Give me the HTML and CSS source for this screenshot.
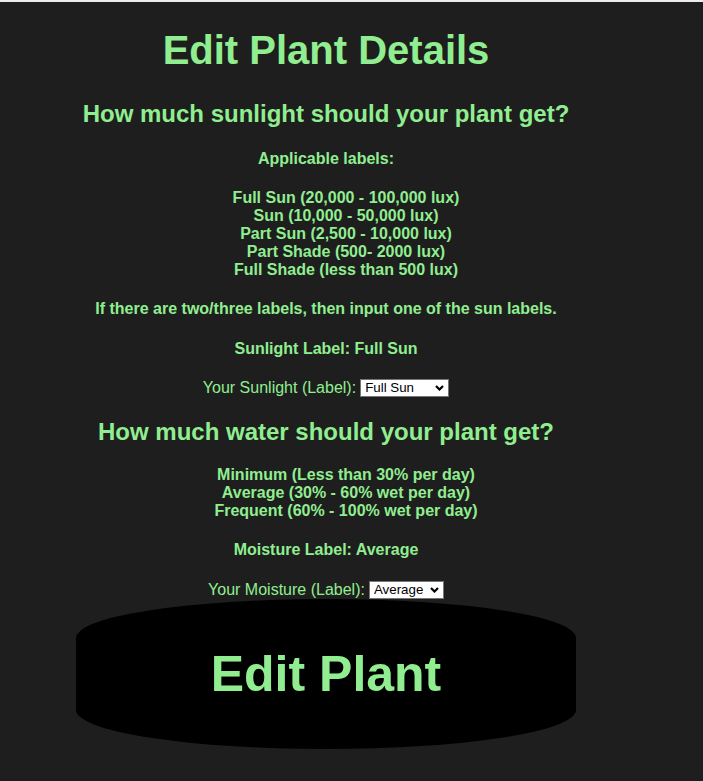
FILE: index.html
```html
<!DOCTYPE html>
<html lang="en">
<head>
<meta charset="utf-8">
<title>Edit Plant Details</title>
<link rel="stylesheet" href="styles.css">
</head>
<body>
<main class="page">
  <h1 class="title">Edit Plant Details</h1>

  <h2 class="section-title section-title--first">How much sunlight should your plant get?</h2>
  <p class="info info--first">Applicable labels:</p>
  <p class="info info--list">Full Sun (20,000 - 100,000 lux)<br>Sun (10,000 - 50,000 lux)<br>Part Sun (2,500 - 10,000 lux)<br>Part Shade (500- 2000 lux)<br>Full Shade (less than 500 lux)</p>
  <p class="info">If there are two/three labels, then input one of the sun labels.</p>
  <p class="info info--label">Sunlight Label: Full Sun</p>
  <div class="field field--sun">
    <label class="field-label" for="sun">Your Sunlight (Label):</label>
    <span class="select-wrap">
      <select id="sun" class="select select--sun">
        <option selected>Full Sun</option>
        <option>Sun</option>
        <option>Part Sun</option>
        <option>Part Shade</option>
        <option>Full Shade</option>
      </select>
      <svg class="chevron" width="9" height="6" viewBox="0 0 9 6" aria-hidden="true"><path d="M1 1 L4.5 4.5 L8 1" fill="none" stroke="#000" stroke-width="2.2"/></svg>
    </span>
  </div>

  <h2 class="section-title section-title--second">How much water should your plant get?</h2>
  <p class="info info--list info--after-water">Minimum (Less than 30% per day)<br>Average (30% - 60% wet per day)<br>Frequent (60% - 100% wet per day)</p>
  <p class="info">Moisture Label: Average</p>
  <div class="field">
    <label class="field-label" for="moist">Your Moisture (Label):</label>
    <span class="select-wrap">
      <select id="moist" class="select select--moist">
        <option>Minimum</option>
        <option selected>Average</option>
        <option>Frequent</option>
      </select>
      <svg class="chevron" width="9" height="6" viewBox="0 0 9 6" aria-hidden="true"><path d="M1 1 L4.5 4.5 L8 1" fill="none" stroke="#000" stroke-width="2.2"/></svg>
    </span>
  </div>

  <button class="submit" type="button">Edit Plant</button>
</main>
</body>
</html>
```
FILE: styles.css
```css
html {
  background: #1e1e1e;
}

body {
  margin: 0;
  border-top: 2px solid #ececec;
  background: #1e1e1e;
  color: #90ee90;
  font-family: "Liberation Sans", Arial, sans-serif;
  min-height: 779px;
}

.page {
  width: 652px;
  display: flex;
  flex-direction: column;
  align-items: stretch;
  text-align: center;
}

.title {
  margin: 25px 0 0;
  font-size: 40px;
  line-height: 46px;
  font-weight: bold;
}

.section-title {
  margin: 0;
  font-size: 24px;
  line-height: 28px;
  font-weight: bold;
}

.section-title--first {
  margin-top: 27px;
}

.section-title--second {
  margin-top: 20px;
}

.info {
  margin: 21px 0 0;
  font-size: 16px;
  line-height: 18px;
  font-weight: bold;
}

.info--first {
  margin-top: 22px;
}

.info--list {
  padding-left: 40px;
}

.info--label {
  margin-top: 22px;
}

.info--after-water {
  margin-top: 20px;
}

.field {
  margin-top: 21px;
  height: 20px;
  display: flex;
  justify-content: center;
  align-items: center;
  gap: 4px;
}

.field--sun {
  margin-top: 20px;
}

.field-label {
  font-size: 16px;
  line-height: 18px;
  font-weight: normal;
}

.select-wrap {
  position: relative;
  display: inline-flex;
}

.select {
  appearance: none;
  -webkit-appearance: none;
  height: 18px;
  margin: 0;
  padding: 0 0 0 4px;
  border: 1px solid #767676;
  border-radius: 0;
  background: #fff;
  color: #000;
  font-family: "Liberation Sans", Arial, sans-serif;
  font-size: 13.33px;
  line-height: 16px;
  box-sizing: border-box;
}

.select--sun {
  width: 89px;
}

.select--moist {
  width: 75px;
}

.chevron {
  position: absolute;
  right: 5px;
  top: 6px;
  pointer-events: none;
}

.submit {
  align-self: center;
  width: 500px;
  height: 150px;
  margin-top: -1px;
  border: none;
  border-radius: 50% / 26%;
  background: #000;
  color: #90ee90;
  font-family: "Liberation Sans", Arial, sans-serif;
  font-size: 50px;
  font-weight: bold;
  padding: 0;
  cursor: pointer;
}
```
